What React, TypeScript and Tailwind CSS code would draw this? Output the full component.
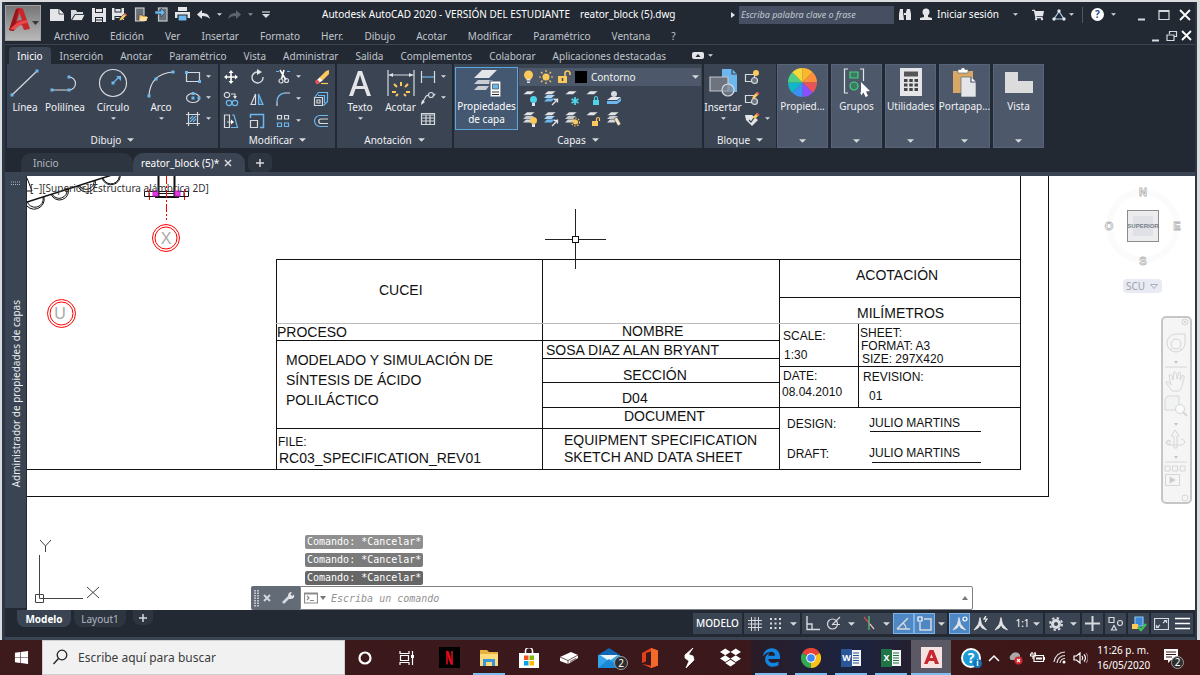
import React from "react";
import { FaDropbox, FaWindows, FaShoppingCart } from "react-icons/fa";
import { FaEdgeLegacy } from "react-icons/fa6";

type Kids = { children?: React.ReactNode };

const Ic = ({ w = 16, h = 16, vb, children }: Kids & { w?: number; h?: number; vb?: string }) => (
  <svg width={w} height={h} viewBox={vb ?? `0 0 ${w} ${h}`} fill="none" stroke="#d6d9dd" strokeWidth="1.2" aria-hidden="true" className="shrink-0">
    {children}
  </svg>
);

const B = "#6cb8ee";
const Y = "#fbc95c";

const Caret = ({ big = false, dim = false }: { big?: boolean; dim?: boolean }) => (
  <svg width={big ? 7 : 5} height={big ? 4 : 3} viewBox="0 0 6 3" className="shrink-0" aria-hidden="true">
    <path d="M0 0h6L3 3z" fill={dim ? "#8a9099" : "#d6d9dd"} />
  </svg>
);

const Dot = ({ x, y }: { x: number; y: number }) => <rect x={x - 1.5} y={y - 1.5} width="3" height="3" fill={B} stroke="none" />;

/* Stack of layer sheets used by the layer tools */
const Sheets = ({ n = 3, blue = false }: { n?: number; blue?: boolean }) => (
  <g stroke="none">
    {n > 2 && <path d="M1 11.500 4 8.500h8l-3.500 3z" fill={blue ? B : "#d6d9dd"} />}
    {n > 1 && <path d="M1 8 4 5h8L8.500 8z" fill={blue ? "#a9d3f3" : "#c5c9ce"} />}
    <path d="M1 4.500 5 1h8L9 4.500z" fill="#e3e5e8" stroke="#3b4453" strokeWidth=".5" />
  </g>
);

const Tool = ({ label, children, caret = false }: Kids & { label: string; caret?: boolean }) => (
  <span className="flex h-[21px] items-center">
    <button aria-label={label} title={label} className="flex h-[20px] w-[20px] items-center justify-center hover:bg-[#4d586a]">
      {children}
    </button>
    {caret && (
      <button aria-label={`Opciones de ${label}`} className="flex h-[20px] w-[10px] items-center justify-center">
        <Caret />
      </button>
    )}
  </span>
);

const Big = ({ label, children, caret = false, w }: Kids & { label: string; caret?: boolean; w: string }) => (
  <button className={`flex flex-col items-center ${w}`}>
    <span className="flex h-[34px] items-center justify-center">{children}</span>
    <span className="whitespace-nowrap text-[10px] leading-[14px] text-[#f0f2f4]">{label}</span>
    {caret && (
      <span className="flex h-[8px] items-center">
        <Caret />
      </span>
    )}
  </button>
);

const Panel = ({ title, w, children }: Kids & { title: string; w: string }) => (
  <section aria-label={title} className={`flex h-[84px] shrink-0 flex-col bg-[#3b4453] ${w}`}>
    <div className="flex flex-1 pt-[2px]">{children}</div>
    <button className="flex h-[16px] items-center justify-center gap-[6px] text-[10px] leading-[16px] text-[#f0f2f4]">
      {title}
      <Caret big />
    </button>
  </section>
);

const Fold = ({ label, children }: Kids & { label: string }) => (
  <button className="flex h-[84px] w-[51px] shrink-0 flex-col items-center border border-[#56637a] bg-[#4d586a]">
    <span className="flex h-[34px] items-center">{children}</span>
    <span className="whitespace-nowrap text-[10px] leading-[14px] text-[#f0f2f4]">{label}</span>
    <span className="mt-auto mb-[4px]">
      <Caret big />
    </span>
  </button>
);

const menus = ["Archivo", "Edición", "Ver", "Insertar", "Formato", "Herr.", "Dibujo", "Acotar", "Modificar", "Paramétrico", "Ventana", "?"];
const tabs = ["Inicio", "Inserción", "Anotar", "Paramétrico", "Vista", "Administrar", "Salida", "Complementos", "Colaborar", "Aplicaciones destacadas"];

const QBtn = ({ label, children }: Kids & { label: string }) => (
  <button aria-label={label} title={label} className="flex h-[20px] w-[21px] shrink-0 items-center justify-center">
    {children}
  </button>
);

function Header() {
  return (
    <header className="flex h-[43px] border-b border-[#3b4453]">
      <button aria-label="Menú de la aplicación" className="mt-[3px] flex h-[36px] w-[36px] shrink-0 items-center border border-[#a2a2a2] bg-linear-to-b from-[#777777] to-[#b9b9b9]">
        <svg width="34" height="34" viewBox="0 0 34 34" aria-hidden="true">
          <path d="M3 24 10 3q4-2 7 0l7 20-6 1-2-5-6 1-3 5z" fill="#c9252b" />
          <path d="M3 24 10 3l3-.500L9 19l-1 6z" fill="#96161b" />
          <path d="m11 15 2.500-8L16 14z" fill="#8b8b8b" />
          <path d="M4 23q7-8 17-9l1 3q-8 0-13 7z" fill="#ea4a4c" />
          <path d="M26 15h7l-3.500 4z" fill="#33373d" />
        </svg>
      </button>
      <div className="flex min-w-0 flex-1 flex-col">
        <div className="flex h-[25px] items-center">
          <div className="ml-[5px] flex items-center">
            <QBtn label="Nuevo"><Ic w={16} h={14}><path d="M1 1h9l5 5v7H1z" fill="#e3e5e8" stroke="none" /><path d="M10 1v5h5" stroke="#222933" fill="#fff" strokeWidth=".8" /></Ic></QBtn>
            <QBtn label="Abrir"><Ic w={16} h={14}><path d="M1 12V2h5l1 2h6v2H5z" fill="#d6d9dd" stroke="none" /><path d="M1.500 12.500 5 6.500h10l-3 6z" fill="#e3e5e8" stroke="#222933" strokeWidth=".8" /></Ic></QBtn>
            <QBtn label="Guardar"><Ic w={14} h={14}><path d="M0 0h14v14H0z" fill="#e3e5e8" stroke="none" /><path d="M3 0h8v5H3zM3 9h8v5H3z" fill="#222933" stroke="none" /><path d="M4 1h6v3H4zM4 10h6v1.500H4zM4 12.500h6V14H4z" fill="#e3e5e8" stroke="none" /></Ic></QBtn>
            <QBtn label="Guardar como"><Ic w={15} h={14}><path d="M0 0h12v12H0z" fill="#e3e5e8" stroke="none" /><path d="M2.500 0h7v4.500h-7zM2.500 8h7v4h-7z" fill="#222933" stroke="none" /><path d="M3.500 1h5v2.500h-5zM3.500 9h4v1h-4z" fill="#e3e5e8" stroke="none" /><path d="m7 13 1-3 5-5 2 2-5 5z" fill={Y} stroke="#222933" strokeWidth=".6" /><path d="m12 6 2 2 1-1-2-2z" fill="#e0575b" stroke="none" /></Ic></QBtn>
            <QBtn label="Abrir desde la Web"><Ic w={14} h={15}><rect x="1.500" y="1" width="8.500" height="13" fill="#6b7078" stroke="#c3c6ca" /><path d="M5 14V8h3l1 1h4v5z" fill={Y} stroke="#222933" strokeWidth=".5" /><path d="m5 14 2-4h7l-2 4z" fill="#ffe0a0" stroke="none" /></Ic></QBtn>
            <QBtn label="Guardar en la Web"><Ic w={14} h={15}><rect x="3.500" y="1" width="8.500" height="13" fill="#6b7078" stroke="#c3c6ca" /><path d="M0 4h6V1l4 4.500L6 10V7H0z" fill={B} stroke="#222933" strokeWidth=".5" /></Ic></QBtn>
            <QBtn label="Imprimir"><Ic w={15} h={15}><path d="M3 0h9v4H3zM0 5h15v6H0z" fill="#e3e5e8" stroke="none" /><path d="M3 8h9v6H3z" fill={B} stroke="#222933" /></Ic></QBtn>
            <QBtn label="Deshacer"><Ic w={15} h={12}><path d="M6 1v3c5 0 7 2 8 6-2-2-4-3-8-3v3L1 5.500z" fill="#e3e5e8" stroke="none" /></Ic></QBtn>
            <span className="flex w-[10px] justify-center"><Caret /></span>
            <QBtn label="Rehacer"><Ic w={15} h={12}><path d="M9 1v3C4 4 2 6 1 10c2-2 4-3 8-3v3l5-4.500z" fill="#5c636e" stroke="none" /></Ic></QBtn>
            <span className="flex w-[10px] justify-center"><Caret dim /></span>
            <QBtn label="Personalizar"><Ic w={8} h={8}><path d="M0 1h8" /><path d="M0 3h8L4 7z" fill="#d6d9dd" stroke="none" /></Ic></QBtn>
          </div>
          <h1 className="flex min-w-0 flex-1 items-center gap-[10px] pl-[46px] text-[10px] whitespace-nowrap text-white">
            <span>Autodesk AutoCAD 2020 - VERSIÓN DEL ESTUDIANTE</span>
            <span>reator_block (5).dwg</span>
          </h1>
          <div className="flex shrink-0 items-center">
            <button aria-label="Contraer búsqueda" className="flex w-[8px] items-center"><svg width="4" height="6" aria-hidden="true"><path d="M0 0v6l4-3z" fill="#e3e5e8" /></svg></button>
            <input aria-label="Buscar" placeholder="Escriba palabra clave o frase" className="h-[18px] w-[155px] bg-[#454f61] px-[2px] text-[9px] text-white italic outline-none placeholder:text-[#c3c8d1]" />
            <QBtn label="Buscar"><Ic w={14} h={13}><path d="M2 1h3v3l1 8H1V6zM9 1h3l1 5v6H8V4z" fill="#e3e5e8" stroke="none" /><path d="M6 5h2v2H6z" fill="#e3e5e8" stroke="none" /></Ic></QBtn>
            <button className="ml-[4px] flex items-center gap-[4px] text-[10px] text-white">
              <Ic w={14} h={13}><circle cx="7" cy="4" r="3.500" fill="#e3e5e8" stroke="none" /><path d="M5 6h4v3l4 1v2H1v-2l4-1z" fill="#e3e5e8" stroke="none" /></Ic>
              <span className="w-[66px] text-left whitespace-nowrap">Iniciar sesión</span>
            </button>
            <span className="flex w-[24px] justify-center"><Caret /></span>
            <QBtn label="App Store"><FaShoppingCart size={12} color="#e3e5e8" /></QBtn>
            <QBtn label="Autodesk"><Ic w={14} h={12}><path d="M7 2.500 2 10h10z" stroke="#a9d3f3" /><circle cx="7" cy="2" r="1.700" fill="#e3e5e8" stroke="none" /><circle cx="2" cy="10" r="1.700" fill="#e3e5e8" stroke="none" /><circle cx="12" cy="10" r="1.700" fill="#e3e5e8" stroke="none" /></Ic></QBtn>
            <Caret />
            <span className="ml-[8px] h-[16px] w-px bg-[#4d586a]" />
            <button aria-label="Ayuda" className="ml-[8px] flex h-[13px] w-[13px] items-center justify-center rounded-full bg-white text-[10px] font-bold text-[#1d4f91]">?</button>
            <span className="flex w-[19px] justify-center"><Caret /></span>
            <div className="ml-[8px] flex">
              <button aria-label="Minimizar" className="flex w-[22px] justify-center"><Ic w={12} h={12}><path d="M2 10.500h7" strokeWidth="2" /></Ic></button>
              <button aria-label="Maximizar" className="flex w-[22px] justify-center"><Ic w={12} h={12}><path d="M1 1.500h10v9H1z" /><path d="M1 2h10" strokeWidth="2" /></Ic></button>
              <button aria-label="Cerrar" className="flex w-[20px] justify-center"><Ic w={12} h={12}><path d="m1 1 10 10M11 1 1 11" strokeWidth="1.800" stroke="#fff" /></Ic></button>
            </div>
          </div>
        </div>
        <div className="flex h-[17px] items-center pr-[3px]">
          <nav aria-label="Menú" className="flex flex-1 gap-[21px] pl-[13px] text-[10px] text-[#c0c4cb]">
            {menus.map((m) => <button key={m} className="leading-[16px]">{m}</button>)}
          </nav>
          <button aria-label="Minimizar dibujo" className="w-[15px]"><Ic w={10} h={12}><path d="M1 10.500h7" strokeWidth="2" /></Ic></button>
          <button aria-label="Restaurar dibujo" className="w-[15px]"><Ic w={12} h={12}><path d="M3.500 4V1.500h7v5H8M1 5h7v5.500H1z" /></Ic></button>
          <button aria-label="Cerrar dibujo" className="w-[11px]"><Ic w={11} h={12}><path d="m1 1 9 9M10 1 1 10" strokeWidth="1.800" stroke="#fff" /></Ic></button>
        </div>
      </div>
    </header>
  );
}

function Ribbon() {
  return (
    <div>
      <div role="tablist" className="flex h-[19px] items-end pl-[4px] text-[10px] text-[#c0c4cb]">
        {tabs.map((t, i) => (
          <button key={t} role="tab" aria-selected={i === 0} className={i === 0 ? "h-[17px] rounded-t-sm bg-[#3b4453] px-[8px] leading-[16px] text-white" : "h-[17px] pr-[8px] pl-[9px] leading-[16px]"}>
            {t}
          </button>
        ))}
        <button aria-label="Minimizar cinta" className="ml-[18px] flex h-[17px] items-center gap-[4px]">
          <Ic w={12} h={7}><rect width="12" height="7" rx="2" fill="#e3e5e8" stroke="none" /><path d="M3.500 5h5L6 2z" fill="#222933" stroke="none" /></Ic>
          <Caret />
        </button>
      </div>
      <div className="flex h-[85px] gap-[2px] overflow-hidden pl-[2px]">
        <Panel title="Dibujo" w="w-[211px]">
          <Big label="Línea" w="w-[36px]"><Ic w={30} h={30}><path d="M2 27 27 3" /><Dot x={2} y={27} /><Dot x={27} y={3} /></Ic></Big>
          <Big label="Polilínea" w="w-[44px]"><Ic w={30} h={30}><path d="M2 22h17a6.500 6.500 0 0 0 0-13" /><Dot x={2} y={22} /><Dot x={19} y={22} /><Dot x={19} y={9} /></Ic></Big>
          <Big label="Círculo" w="w-[52px]" caret><Ic w={30} h={30}><circle cx="15" cy="15" r="13.500" /><path d="m15 15 6-6" stroke={B} /><path d="M18 8h5v5z" fill={B} stroke="none" /><Dot x={15} y={15} /></Ic></Big>
          <Big label="Arco" w="w-[44px]" caret><Ic w={30} h={30}><path d="M3 28Q4 6 27 4" /><Dot x={3} y={28} /><Dot x={10} y={11} /><Dot x={27} y={4} /></Ic></Big>
          <div className="flex flex-col">
            <Tool label="Rectángulo" caret><Ic><path d="M1.500 3.500h13v9h-13z" /><Dot x={1.500} y={3.500} /><Dot x={14.500} y={12.500} /></Ic></Tool>
            <Tool label="Elipse" caret><Ic><ellipse cx="8" cy="8" rx="6.500" ry="4.500" /><Dot x={8} y={8} /><Dot x={14} y={8} /><Dot x={8} y={3.500} /></Ic></Tool>
            <Tool label="Sombreado" caret><Ic><path d="M3.500 1v14M12.500 1v14M1 3.500h14M1 12.500h14" /><path d="m5 8 3-3M5 11l6-6M8 11l3-3" stroke={B} /></Ic></Tool>
          </div>
        </Panel>
        <Panel title="Modificar" w="w-[115px]">
          <div className="grid grid-cols-[26px_26px_38px_22px] pl-[1px]">
            <Tool label="Desplaza"><Ic><path d="M8 2v12M2 8h12" strokeWidth="1.600" stroke="#fff" /><path d="M8 1 5.500 4h5zM8 15l-2.500-3h5zM1 8l3-2.500v5zM15 8l-3-2.500v5z" fill="#fff" stroke="none" /></Ic></Tool>
            <Tool label="Gira"><Ic><path d="M9 3a5.500 5.500 0 1 0 5 5" strokeWidth="1.400" /><path d="M8 0v6l5-3z" fill="#e3e5e8" stroke="none" /></Ic></Tool>
            <Tool label="Recorta" caret><Ic><path d="M1 2.500h3M12 2.500h3" stroke={B} /><path d="m5 1 6 10M9 1 6.500 10" stroke="#fff" strokeWidth="1.600" /><circle cx="6" cy="12" r="2" /><circle cx="11.500" cy="11.500" r="2" /></Ic></Tool>
            <Tool label="Borra"><Ic><path d="m6 9 7-7 3-1v4l-7 7z" fill={Y} stroke="none" /><path d="m3 12 3.500-3.500 3 3L6 14H3z" fill="#fff" stroke="none" /><path d="m2 12 2-1.500L7 13l-1.500 2H3z" fill="#e0575b" stroke="none" /><path d="M8 14.500h7" stroke={Y} /></Ic></Tool>
            <Tool label="Copia"><Ic><circle cx="4" cy="4" r="2.700" /><circle cx="6" cy="12" r="2.700" stroke={B} /><circle cx="12" cy="12" r="2.700" stroke={B} /><path d="M8 3h4v4" /><path d="M10 5h4l-2 3z" fill="#e3e5e8" stroke="none" /></Ic></Tool>
            <Tool label="Simetría"><Ic><path d="M6.500 3v10.500H2z" /><path d="M9.500 3v10.500H14z" stroke={B} fill="#3f6d93" /></Ic></Tool>
            <Tool label="Empalme" caret><Ic><path d="M2 11Q2 3 10 2" stroke={B} strokeWidth="1.400" /><path d="M10 2h5M2 11v4" /></Ic></Tool>
            <Tool label="Descompone"><Ic><path d="M1.500 6.500h8v8h-8z" /><path d="m1.500 6.500 4-5h9v9l-4 4M5 4.500h6.500V12" stroke={B} /><path d="M4 9h3v3H4z" /></Ic></Tool>
            <Tool label="Estira"><Ic><path d="M1.500 2v12.500h5V2zM4 9h6" /><path d="M9 2h2l3.500 12.500H8" stroke={B} /><path d="m8 6.500 3 2.500-3 2.500z" fill="#fff" stroke="none" /></Ic></Tool>
            <Tool label="Escala"><Ic><path d="M1.500 7.500h7v7h-7z" /><path d="M1.500 5V1.500h13v13H11" stroke={B} strokeWidth="1.500" /></Ic></Tool>
            <Tool label="Matriz" caret><Ic><path d="M2.500 2.500h4V6h-4zM9.500 2.500h4V6h-4z" /><path d="M2.500 10h4v3.500h-4zM9.500 10h4v3.500h-4z" stroke={B} /></Ic></Tool>
            <Tool label="Desfase"><Ic><path d="M15 2.500H7a5 5 0 0 0 0 11h8" stroke={B} /><path d="M15 6H8a2 2 0 0 0 0 4.500h7" /></Ic></Tool>
          </div>
        </Panel>
        <Panel title="Anotación" w="w-[115px]">
          <Big label="Texto" w="w-[46px]" caret><Ic w={26} h={28}><path d="M2 27 11 2h4l9 25h-4l-2.500-7H8.500L6 27zM9.500 17h7L13 6z" fill="#e3e5e8" stroke="none" /></Ic></Big>
          <Big label="Acotar" w="w-[35px]"><Ic w={30} h={30}><path d="M2 2v26M28 2v26M2 7h26" /><path d="m3 7 4-2v4zM27 7l-4-2v4z" fill="#e3e5e8" stroke="none" /><path d="M15 14v4M8 16l3 3M22 16l-3 3M6 24h4M20 24h4M10 28l2-2M20 28l-2-2" stroke={Y} strokeWidth="2" /></Ic></Big>
          <div className="flex flex-col">
            <Tool label="Lineal" caret><Ic><path d="M1 8h14" stroke={B} /><path d="M1.500 2v12M14.500 2v12" /></Ic></Tool>
            <Tool label="Directriz" caret><Ic><circle cx="11" cy="5" r="2.500" /><path d="M14 6q0-2 1.500-2M9 5q-3 0-4 3l-3 5" /><path d="m1 15 1-5 3 2z" fill="#e3e5e8" stroke="none" /></Ic></Tool>
            <Tool label="Tabla"><Ic><path d="M1.500 2.500h13v11h-13zM1.500 4h13M1.500 7h13M1.500 10h13M6 4v10M10 4v10" /></Ic></Tool>
          </div>
        </Panel>
        <Panel title="Capas" w="w-[248px]">
          <button className="mt-px ml-[1px] flex h-[63px] w-[63px] shrink-0 flex-col items-center border border-[#5aa7e0] bg-[#445872]">
            <Ic w={32} h={32}><path d="m3 10 8-8h15l-8 8z" fill="#e3e5e8" stroke="none" /><path d="m3 16 4-4h15l-4 4zM3 22l4-4h11l-3 4z" fill="#c9cdd2" stroke="none" /><path d="M19 13h11v16H19z" fill="#fff" stroke="#445872" /><path d="M21.500 16h6v5h-6z" fill={B} stroke="#333" strokeWidth=".6" /><path d="M21 24h7M21 26.500h7" stroke="#333" /></Ic>
            <span className="text-[10px] leading-[13px] text-white">Propiedades<br />de capa</span>
          </button>
          <div className="flex flex-1 flex-col pl-[1px]">
            <div className="mt-[2px] mr-px flex h-[18px] items-center gap-[4px] bg-[#4d586a] pl-[3px]">
              <Ic w={13} h={14}><circle cx="6.500" cy="5" r="4.500" fill={Y} stroke="none" /><path d="M4.500 9h4v1.500h-4zM5 11.500h3V13H5z" fill="#e3e5e8" stroke="none" /></Ic>
              <Ic w={14} h={14}><circle cx="7" cy="7" r="3.500" fill={Y} stroke="none" /><path d="M7 0v2M7 12v2M0 7h2M12 7h2M2 2l1.500 1.500M10.500 10.500 12 12M12 2l-1.500 1.500M3.500 10.500 2 12" stroke={Y} /></Ic>
              <Ic w={14} h={14}><path d="M1 6h9v7H1z" fill={Y} stroke="none" /><path d="M8 6V3.500a2.500 2.500 0 0 1 5 0V5" stroke={Y} strokeWidth="1.600" /><path d="M5.500 8v3" stroke="#3b4453" strokeWidth="1.500" /></Ic>
              <span className="h-[12px] w-[12px] bg-black" />
              <span className="flex min-w-0 flex-1 items-center pr-[2px]">
                <select aria-label="Capa actual" className="min-w-0 flex-1 appearance-none text-[10px] leading-[16px] text-[#f0f2f4] outline-none">
                  <option>Contorno</option>
                </select>
                <Caret big />
              </span>
            </div>
            <div className="mt-px flex w-[105px] flex-wrap">
              {["Desactivar", "Aislar", "Inutilizar", "Bloquear", "Definir como actual", "Activar todas", "Desaislar", "Reutilizar todas", "Desbloquear", "Igualar capa"].map((l, i) => (
                <button key={l} aria-label={l} className="flex h-[21px] w-[21px] items-center justify-center">
                  <Ic>
                    {i === 4 ? <g stroke="none"><path d="m1 10 4-3h10l-4 3z" fill="#e3e5e8" /><path d="M1 11v3h10l4-3V8l-4 3z" fill={B} /><circle cx="8" cy="4" r="3" fill="#d6d9dd" /></g> : <Sheets n={[1, 3, 1, 1, 3, 3, 3, 3, 1, 3][i]} blue={i === 1 || i === 6} />}
                    {i === 0 && <g stroke="none"><circle cx="11.500" cy="9.500" r="3.500" fill="#4fd3e6" /><path d="M10 13h3v3h-3z" fill="#e3e5e8" /></g>}
                    {i === 5 && <g stroke="none"><circle cx="11.500" cy="9.500" r="3.500" fill={Y} /><path d="M10 13h3v3h-3z" fill="#e3e5e8" /></g>}
                    {(i === 1 || i === 6) && <path d="m9 15 5-5M14.500 8.500v4M14.500 9.500h-3.500" stroke="#e3e5e8" strokeWidth="1.300" />}
                    {i === 2 && <path d="M11 7v8M7.500 9l7 4M14.500 9l-7 4" stroke="#4fd3e6" strokeWidth="1.800" />}
                    {i === 7 && <g><circle cx="11.500" cy="11" r="2.500" fill={Y} stroke="none" /><circle cx="11.500" cy="11" r="4" stroke={Y} strokeDasharray="1.500 1.500" /></g>}
                    {i === 3 && <g><path d="M8 10h6v5H8z" fill="#4fd3e6" stroke="none" /><path d="M9.500 10V8a1.500 1.500 0 0 1 3 0v2" stroke="#4fd3e6" /></g>}
                    {i === 8 && <g><path d="M7 10h6v5H7z" fill={Y} stroke="none" /><path d="M11.500 10V8a1.500 1.500 0 0 1 3 0v2" stroke={Y} /></g>}
                    {i === 9 && <path d="m8 8 3-2 4 7-3 2z" fill="#f3e6c4" stroke="#3b4453" strokeWidth=".6" />}
                  </Ic>
                </button>
              ))}
            </div>
          </div>
        </Panel>
        <Panel title="Bloque" w="w-[72px]">
          <Big label="Insertar" w="w-[38px]" caret><Ic w={30} h={30}><path d="M14 1h10l5 5v18H14z" fill={B} stroke="none" /><path d="M24 1v5h5" stroke="#3b4453" /><path d="M2 9h18v14H2z" fill="#6d7480" stroke="#c3c6ca" /><circle cx="20" cy="22" r="6" fill="#808894" fillOpacity=".7" /></Ic></Big>
          <div className="flex flex-col">
            {["Crear bloque", "Editar bloque", "Editar atributos"].map((l, i) => (
              <Tool key={l} label={l} caret={i === 2}>
                <Ic>
                  {i < 2 ? <g><path d="M1.500 5.500h9v7h-9z" /><circle cx="10.500" cy="11.500" r="3" fill="#6d7480" /></g> : <path d="M1 4h7l6 5-6 6-6-6z" fill="#e3e5e8" stroke="none" />}
                  {i === 0 ? <circle cx="12" cy="4" r="3" fill={Y} stroke="none" /> : <g stroke="none"><path d="m8 9 1-3 4-4 2 2-4 4z" fill={Y} /><path d="m12 3 2 2 1.500-1.500-2-2z" fill="#e0575b" /></g>}
                  {i === 2 && <path d="m5 9 2 2 3-4" stroke="#3b4453" />}
                </Ic>
              </Tool>
            ))}
          </div>
        </Panel>
        <div className="ml-[-1px] flex gap-[3px]">
          <Fold label="Propied...">
            <svg width="29" height="29" viewBox="-15 -15 30 30" aria-hidden="true">
              {["#ffb62e", "#ff8f3a", "#e9545a", "#8b4fff", "#3a8ff0", "#12b5c9", "#4fcf86", "#f3d93a"].map((c, i) => (
                <path key={c} d="M0 0 0-15A15 15 0 0 1 10.600-10.600z" fill={c} transform={`rotate(${i * 45})`} />
              ))}
            </svg>
          </Fold>
          <Fold label="Grupos"><Ic w={28} h={30}><path d="M5 2H1.500v24H5M17 2h3.500v12M17 26h1" stroke="#e3e5e8" /><path d="M7 5h8v6H7z" stroke="#45d17f" fill="#3c7a64" /><circle cx="11" cy="19" r="4" stroke="#45d17f" fill="#3c7a64" /><path d="m18 15 9 9-4 .500 2 4.500-2.500 1-2-4.500-2.500 3z" fill="#fff" stroke="none" /></Ic></Fold>
          <Fold label="Utilidades"><Ic w={22} h={28}><path d="M0 0h22v28H0z" fill="#e3e5e8" stroke="none" /><path d="M4 3.500h14v5H4z" fill="#555" stroke="none" /><path d="M4 12.500h14M4 17h14M4 21.500h14" stroke="#444" strokeWidth="3" strokeDasharray="3.500 1.750" /></Ic></Fold>
          <Fold label="Portapap..."><Ic w={26} h={29}><path d="M1 3h20v22H1z" fill="#d9a866" stroke="none" /><path d="M6 1.500h3a2 2 0 0 1 4 0h3V5H6z" fill="#fff" stroke="#4d586a" strokeWidth=".6" /><path d="M9 9h10l5 5v15H9z" fill="#e3e5e8" stroke="#4d586a" strokeWidth=".6" /><path d="M19 9v5h5" stroke="#4d586a" fill="#fff" /></Ic></Fold>
          <Fold label="Vista"><Ic w={30} h={24}><path d="M1 2h13v9h15v12H1z" fill="#dcdcdc" stroke="none" /></Ic></Fold>
        </div>
      </div>
    </div>
  );
}

function FileTabs() {
  return (
    <div className="border-b-4 border-[#3b4453]">
      <div role="tablist" className="flex h-[23px] items-end pl-[16px] text-[10px] leading-[16px]">
        <button role="tab" aria-selected="false" className="h-[19px] w-[112px] rounded-t-[10px] bg-[#2d3541] pl-[12px] text-left text-[#b3b8c0]">Inicio</button>
        <div className="flex h-[19px] w-[112px] items-center rounded-t-[10px] bg-[#3b4453] pl-[8px] text-white">
          <button role="tab" aria-selected="true" className="w-[83px] text-left whitespace-nowrap">reator_block (5)*</button>
          <button aria-label="Cerrar reator_block"><Ic w={8} h={8}><path d="m1 1 6 6M7 1 1 7" strokeWidth="1.500" /></Ic></button>
        </div>
        <button aria-label="Nuevo dibujo" className="ml-[3px] flex h-[19px] w-[24px] items-center justify-center rounded-[6px] bg-[#2d3541]">
          <Ic w={8} h={8}><path d="M4 0v8M0 4h8" strokeWidth="1.500" /></Ic>
        </button>
      </div>
    </div>
  );
}

type Label = [string, number, number];
const wide: Label[] = [
  ["CUCEI", 379, 295], ["PROCESO", 277, 337], ["MODELADO Y SIMULACIÓN DE", 286, 365], ["SÍNTESIS DE ÁCIDO", 286, 385], ["POLILÁCTICO", 286, 405],
  ["NOMBRE", 622, 336], ["SOSA DIAZ ALAN BRYANT", 546, 355], ["SECCIÓN", 623, 380], ["D04", 622, 403], ["DOCUMENT", 624, 421],
  ["ACOTACIÓN", 856, 280], ["MILÍMETROS", 857, 318], ["RC03_SPECIFICATION_REV01", 279, 463], ["EQUIPMENT SPECIFICATION", 564, 445], ["SKETCH AND DATA SHEET", 564, 462],
];
const small: Label[] = [
  ["FILE:", 278, 446], ["SCALE:", 783, 340], ["1:30", 784, 359], ["SHEET:", 860, 337], ["FORMAT: A3", 861, 350], ["SIZE: 297X420", 862, 363],
  ["DATE:", 783, 380], ["08.04.2010", 782, 396], ["REVISION:", 863, 381], ["01", 869, 400], ["DESIGN:", 787, 428], ["DRAFT:", 787, 458],
  ["JULIO MARTINS", 869, 427], ["JULIO MARTINS", 869, 457],
];

const Drawing = () => (
  <svg width="1022" height="434" viewBox="27 176 1022 434" className="absolute top-0 left-0" aria-label="Cajetín del plano" role="img">
    <g stroke="#111" fill="none" shapeRendering="crispEdges">
      <path d="M1048.500 176V496.500H27M1020.500 176V469.500H27" />
      <path d="M276.500 469V259.500H1020M542.500 259V469M779.500 259V469" />
      <path d="M276 340.500H779M542 358.500H779M542 382.500H779M542 407.500H779M276 428.500H779" />
      <path d="M779 297.500H1020M779 366.500H1020M779 407.500H1020M858.500 324V407" />
      <path d="M870 431.500H981M872 462.500H981" />
      <path d="M276 323.500H1020" stroke="#bbb" />
      <path d="M575.500 209V269M545 239.500H606" stroke="#222" />
      <rect x="572.500" y="236.500" width="6" height="6" fill="#fff" />
    </g>
    <g fill="#111" fontFamily="'Liberation Sans', Arial, sans-serif" fontSize="14">
      {wide.map(([t, x, y]) => <text key={t} x={x} y={y}>{t}</text>)}
    </g>
    <g fill="#111" fontFamily="'Liberation Sans', Arial, sans-serif" fontSize="12">
      {small.map(([t, x, y]) => <text key={`${t}${y}`} x={x} y={y}>{t}</text>)}
    </g>
    <g stroke="#111" fill="none">
      <path d="M27 202 112 175" strokeWidth="1.500" />
      <path d="M27 201a8 8 0 0 0 16-4M25 203a10 10 0 0 0 19-6M52 194a8 8 0 0 0 15-5M51 194a9 9 0 0 0 17-6M79 185a8 8 0 0 0 15-5M78 186a9 9 0 0 0 17-6M103 178a8 8 0 0 0 16-5M102 178a9 9 0 0 0 18-5M27 178l5 13h-5" />
      <path d="M158.500 176V197M174.500 176V197" strokeWidth="2" />
      <path d="M144.500 191.500H188.500V196.500H144.500zM158 193.500H175M149 191v6M184 191v6M155 197.500h24" />
      <path d="M153 191h5v5h-5zM175 191h5v5h-5z" fill="#e23be2" stroke="#d21bd2" />
      <g stroke="#f00">
        <path d="M166.500 176V220" strokeDasharray="8 2 2 2" />
        <path d="M149.500 189v11M184.500 189v11" strokeDasharray="3 1" />
        <circle cx="166" cy="238" r="13.500" /><circle cx="166" cy="238" r="11" />
        <circle cx="61.500" cy="313.500" r="14" /><circle cx="61.500" cy="313.500" r="11.500" />
      </g>
    </g>
    <g fill="#aaa" fontFamily="'Liberation Sans', Arial, sans-serif" fontSize="16" textAnchor="middle">
      <text x="166" y="244">X</text>
      <text x="60" y="319">U</text>
    </g>
  </svg>
);

const ViewCube = () => (
  <div className="absolute top-[8px] right-[10px] flex w-[84px] flex-col items-center">
    <svg width="84" height="84" viewBox="0 0 84 84" fontFamily="'Liberation Sans', Arial, sans-serif" fontSize="11" fontWeight="bold" textAnchor="middle" aria-label="ViewCube" role="img">
      <circle cx="42" cy="42" r="34" fill="none" stroke="#fbfbfb" strokeWidth="6" />
      <rect x="26.500" y="26.500" width="31" height="31" fill="#ececee" stroke="#8c8c8c" />
      <rect x="32" y="32" width="20" height="20" fill="#dfe1e6" />
      <text x="42" y="44" fontSize="6" fill="#777e88">SUPERIOR</text>
      <g fill="#fff" stroke="#b4b4b4" strokeWidth=".8">
        <text x="42" y="12">N</text><text x="42" y="81">S</text><text x="8" y="46">O</text><text x="76" y="46">E</text>
      </g>
    </svg>
    <button className="mt-[11px] ml-[-2px] flex h-[14px] w-[39px] items-center justify-center gap-[5px] rounded-sm bg-[#e9ebf4] text-[10px] text-[#9b9ea6]">
      SCU
      <svg width="8" height="5" aria-hidden="true"><path d="M.500.500h7L4 4.500z" fill="none" stroke="#a9adb5" /></svg>
    </button>
  </div>
);

const NavBar = () => (
  <div className="absolute top-[140px] right-[3px] flex h-[188px] w-[31px] flex-col items-center rounded-[5px] border-2 border-[#c6c6c6] bg-[#f5f5f5]">
    <svg width="27" height="184" viewBox="0 0 27 184" fill="none" stroke="#d6d6d6" role="img" aria-label="Barra de navegación">
      <circle cx="22" cy="4" r="3" /><path d="m20.500 2.500 3 3M23.500 2.500l-3 3" />
      <path d="M13 16h9v9a9 9 0 1 1-9-9z" /><circle cx="13" cy="26" r="5" /><path d="m9 30-2 3M17 30l2 3" />
      <path d="M11 43h4l-2 3z" fill="#c6c6c6" stroke="none" /><path d="M2 49h22" />
      <path d="M9 73c-2-4-5-6-6-9 2-1 4 1 5 3L6 57c2-1 3 0 4 5l1-8c2 0 3 1 3 7l2-7c2 0 2 2 1 8l3-5c2 1 1 3 0 7-1 5-2 7-4 9z" />
      <path d="M2 81l3-3h11v11l-3 3H2z" fill="#f0f3f2" /><circle cx="17" cy="91" r="4.500" fill="#fafafa" /><path d="m20 94 4 4" strokeWidth="2" />
      <path d="M11 105h4l-2 3z" fill="#c6c6c6" stroke="none" />
      <path d="M11 130v-12H8l4-6 4 6h-2v12zM6 122c-4 1-4 4 0 5h12c5-1 5-5 0-6M3 125l4-3v5z" />
      <path d="M11 138h4l-2 3z" fill="#c6c6c6" stroke="none" /><path d="M2 144h22" />
      <path d="M2 148h5v5H2zM9.500 148h5v5h-5zM17 148h5v5h-5zM2.500 156.500h14v11h-14z" /><path d="m7 159 5 3-5 3z" fill="#c6c6c6" />
      <circle cx="22" cy="180" r="3" />
    </svg>
  </div>
);

const fades = ["bg-[#8f8f8f]", "bg-[#7a7a7a]", "bg-[#666666]"];

function Workspace() {
  return (
    <main className="flex min-h-[434px] flex-1">
      <aside className="mb-[2px] flex w-[22px] shrink-0 flex-col items-center border-r border-[#222933] bg-[#3b4453]">
        <svg width="10" height="5" className="mt-[5px]" aria-hidden="true"><path d="M0 1h10M0 3.500h10" stroke="#aeb4bd" strokeDasharray="1 1" /></svg>
        <span className="mt-[114px] rotate-180 text-[10px] leading-[16px] whitespace-nowrap text-[#eceef1] [writing-mode:vertical-rl]">Administrador de propiedades de capas</span>
      </aside>
      <div className="relative flex-1 overflow-hidden bg-white">
        <Drawing />
        <p className="absolute top-[4px] left-[3px] text-[10px] leading-[16px] text-[#333]">[−][Superior][Estructura alámbrica 2D]</p>
        <ViewCube />
        <NavBar />
        <svg width="80" height="70" viewBox="0 0 80 70" className="absolute bottom-0 left-[4px]" fill="none" stroke="#444" aria-label="Icono SCP" role="img">
          <path d="M8.500 15v43.500H52M4.500 54.500h8v8h-8zM9 0l5.500 6L20 0M14.500 6v6M56 47l12 11M68 47 56 58" />
        </svg>
        <div className="absolute bottom-0 left-[224px] flex w-[722px] flex-col">
          <ol className="ml-[54px] flex flex-col items-start gap-[4px] pb-[1px] font-['DejaVu_Sans_Mono',monospace] text-[10px] leading-[14px] text-white">
            {fades.map((f) => <li key={f} className={`rounded-[2px] px-[2px] ${f}`}>Comando: *Cancelar*</li>)}
          </ol>
          <form className="flex h-[24px]" onSubmit={(e) => e.preventDefault()}>
            <div className="flex w-[49px] items-center rounded-l-[2px] bg-[#636b77] pl-[3px]">
              <svg width="5" height="17" aria-hidden="true"><path d="M1 0v17M4 0v17" stroke="#e3e5e8" strokeWidth="1.500" strokeDasharray="1.500 1" /></svg>
              <button type="button" aria-label="Cerrar línea de comando" className="ml-[4px]"><Ic w={8} h={8}><path d="m1 1 6 6M7 1 1 7" strokeWidth="1.800" /></Ic></button>
              <button type="button" aria-label="Personalizar" className="ml-[10px]"><Ic w={14} h={14}><path d="m2 12 6-6" strokeWidth="2.600" /><path d="M7 5q0-4 4-4L9.500 3.500l1.500 1.500L13 3.500q1 4-3 4.500H8z" fill="#e3e5e8" stroke="none" /></Ic></button>
            </div>
            <div className="flex flex-1 items-center rounded-r-[2px] border border-[#7c7f84] bg-white pl-[3px]">
              <Ic w={14} h={12}><path d="M.500 1h13v10H.500zM.500 2h13" stroke="#8b8b8b" /><path d="m3 4 2 2-2 2M6 8.500h4" stroke="#8b8b8b" /></Ic>
              <svg width="6" height="4" className="mx-[2px]" aria-hidden="true"><path d="M0 0h6L3 4z" fill="#777" /></svg>
              <input aria-label="Comando" placeholder="Escriba un comando" className="ml-[3px] min-w-0 flex-1 font-['DejaVu_Sans_Mono',monospace] text-[10px] italic outline-none placeholder:text-[#929292]" />
              <svg width="6" height="4" className="mr-[4px]" aria-hidden="true"><path d="M0 4h6L3 0z" fill="#777" /></svg>
            </div>
          </form>
        </div>
      </div>
    </main>
  );
}

const S = ({ label, on = false, w = "w-[21px]", children }: Kids & { label: string; on?: boolean; w?: string }) => (
  <button aria-label={label} aria-pressed={on} className={`flex h-[21px] items-center justify-center ${w} ${on ? "border border-[#7cb2e8] bg-[#4f86c4]" : ""}`}>
    {children}
  </button>
);
const G = ({ children }: Kids) => <div className="flex h-[21px] items-center bg-[#3b4453]">{children}</div>;

const Compass = ({ extra }: { extra?: React.ReactNode }) => (
  <Ic><path d="M7 1.500 8.500 8l5 6-4.500-2L7 9l-2 3-4 2 4.500-6z" fill="#e3e5e8" stroke="#e3e5e8" strokeWidth=".8" />{extra}</Ic>
);

function StatusBar() {
  return (
    <footer className="flex h-[30px] items-start border-b-[3px] border-[#3b4453]">
      <div className="flex items-start gap-[3px] pl-[12px] text-[10px] text-[#b3b8c0]">
        <button className="h-[17px] w-[54px] rounded-b-[8px] bg-[#3b4453] leading-[16px] font-bold text-white">Modelo</button>
        <button className="h-[17px] w-[52px] rounded-b-[8px] bg-[#2d3541] leading-[16px]">Layout1</button>
        <button aria-label="Nueva presentación" className="ml-[4px] flex h-[15px] w-[20px] items-center justify-center rounded-b-[7px] bg-[#2d3541]"><Ic w={8} h={8}><path d="M4 0v8M0 4h8" strokeWidth="1.500" /></Ic></button>
      </div>
      <div className="mt-[3px] mr-[2px] ml-auto flex gap-[2px]">
        <G><button className="w-[49px] text-[10px] font-medium text-white">MODELO</button></G>
        <G>
          <S label="Rejilla"><Ic w={14} h={14}><path d="M3.500 0v14M7 0v14M10.500 0v14M0 3.500h14M0 7h14M0 10.500h14" strokeWidth="1" /></Ic></S>
          <S label="Forzado"><Ic w={13} h={13}><path d="M1 2h12M1 6.500h12M1 11h12" strokeWidth="2" strokeDasharray="2 2.500" /></Ic></S>
          <S label="Opciones de forzado" w="w-[14px]"><Caret big /></S>
        </G>
        <G>
          <S label="Orto"><Ic w={15} h={15}><path d="M2 0v13.500h13M2 8h5v5" strokeWidth="1.400" /></Ic></S>
          <S label="Polar"><Ic w={15} h={15}><circle cx="6.500" cy="8" r="5" /><path d="M6 9 14 1M6 8.500h8" /></Ic></S>
          <S label="Opciones polares" w="w-[14px]"><Caret big /></S>
          <S label="Isométrico"><Ic w={14} h={15}><path d="m2 1 10 12" stroke="#d44a50" /><path d="M7 0v14" stroke="#57c97d" /><path d="m8 8 4 5" /></Ic></S>
          <S label="Opciones isométricas" w="w-[14px]"><Caret big /></S>
          <S label="Rastreo" on><Ic w={15} h={14}><path d="M1 12 12 1M1 12h13" strokeWidth="1.500" /><path d="M7 6q3 2 3 6" /></Ic></S>
          <S label="Referencia a objetos" on><Ic w={15} h={15}><path d="M3 6v8h11V3H7" strokeWidth="1.500" /><path d="M1 1h4v4H1z" stroke="#fff" /></Ic></S>
          <S label="Opciones de referencia" w="w-[12px]"><Caret big /></S>
        </G>
        <G>
          <S label="Visibilidad de anotación" on><Compass extra={<circle cx="13" cy="3" r="2" stroke="#fff" />} /></S>
          <S label="Escala automática"><Compass extra={<path d="m13 0-2 3h3l-2 3" stroke="#fff" />} /></S>
          <S label="Anotación"><Compass /></S>
          <button className="flex h-[21px] w-[31px] items-center justify-center gap-[3px] text-[10px] text-white">1:1<Caret big /></button>
        </G>
        <G>
          <S label="Espacio de trabajo"><Ic w={14} h={14}><circle cx="7" cy="7" r="3.500" strokeWidth="3" /><circle cx="7" cy="7" r="6" strokeWidth="2" strokeDasharray="2.400 2.310" /></Ic></S>
          <S label="Opciones de espacio" w="w-[14px]"><Caret big /></S>
        </G>
        <G><S label="Monitor"><Ic w={15} h={15}><path d="M7.500 0v15M0 7.500h15" strokeWidth="2" /></Ic></S></G>
        <G><S label="Aislar objetos"><Ic w={15} h={15}><path d="M1 1.500h5v5H1zM8.500 14h-5L6 9.500z" /><circle cx="12" cy="7" r="2.500" /></Ic></S></G>
        <G><S label="Rendimiento"><Ic><path d="M4 1h8v9H4z" fill="#3a87d8" stroke="#8cc3f0" /><path d="M1 8h6v5H1z" fill={Y} stroke="none" /><path d="m7 11 3 3 5-6" stroke="#3fbf55" strokeWidth="2.500" /></Ic></S></G>
        <G>
          <S label="Pantalla limpia"><Ic w={15} h={12}><path d="M.500.500h14v11H.500zM9 5l3-2.500M6 7 3 9.500M10 2.500h2.500V5M5 9.500H2.500V7" /></Ic></S>
          <S label="Personalización"><Ic w={15} h={13}><path d="M0 1.500h15M0 6.500h15M0 11.500h15" strokeWidth="1.600" stroke="#fff" /></Ic></S>
        </G>
      </div>
    </footer>
  );
}

const Task = ({ label, run = false, active = false, children }: Kids & { label: string; run?: boolean; active?: boolean }) => (
  <button aria-label={label} title={label} className={`relative flex h-[35px] w-[40px] shrink-0 items-center justify-center ${active ? "bg-[#5b5965]" : ""}`}>
    {children}
    {run && <span className={active ? "absolute inset-x-0 bottom-0 h-[2px] bg-[#7dbdf0]" : "absolute inset-x-[4px] bottom-0 h-[2px] bg-[#7dbdf0]"} />}
  </button>
);

const Doc = ({ c, l }: { c: string; l: string }) => (
  <span className="flex h-[18px] items-center">
    <span className="flex h-[18px] w-[11px] items-center justify-center text-[9px] font-bold text-white" style={{ background: c }}>{l}</span>
    <svg width="9" height="16" aria-hidden="true"><path d="M0 0h9v16H0z" fill="#f4f4f4" /><path d="M1 3h6M1 5.500h6M1 8h6M1 10.500h6M1 13h6" stroke={c} /></svg>
  </span>
);

function Taskbar() {
  return (
    <div className="flex h-[35px] items-center bg-linear-to-r from-[#3d1a1c] via-[#3a181b] via-55% to-[#3f1717] text-white">
      <button aria-label="Inicio" className="flex h-[35px] w-[42px] shrink-0 items-center justify-center"><FaWindows size={15} /></button>
      <label className="flex h-[35px] w-[303px] shrink-0 items-center gap-[9px] border border-[#cfcfcf] bg-[#f1f1f1] pl-[9px]">
        <svg width="17" height="17" viewBox="0 0 17 17" fill="none" stroke="#222" strokeWidth="1.300" aria-hidden="true"><circle cx="10" cy="6" r="4.800" /><path d="M6.500 9.500 1.500 15" /></svg>
        <input aria-label="Buscar" placeholder="Escribe aquí para buscar" className="min-w-0 flex-1 text-[12px] text-black outline-none placeholder:text-[#3c3c3c]" />
      </label>
      <Task label="Cortana"><Ic><circle cx="8" cy="8" r="5.500" strokeWidth="2.200" stroke="#fff" /></Ic></Task>
      <div className="mx-[2px]"><Task label="Vista de tareas"><Ic><path d="M1 1v2.500h9V1M1 15v-2.500h9V15M1.500 5.500h8v5h-8zM13.500 1v14" stroke="#fff" /><path d="M12 5h3v3h-3z" fill="#fff" stroke="none" /></Ic></Task></div>
      <Task label="Netflix"><Ic w={21} h={21}><path d="M0 0h21v21H0z" fill="#000" stroke="none" /><path d="M8 4v13.500M13 4v13.500" stroke="#b00710" strokeWidth="2" /><path d="m7 4 4.500 13.500H14L9.500 4z" fill="#e50914" stroke="none" /></Ic></Task>
      <Task label="Explorador de archivos" run><Ic w={20} h={18}><path d="M1 1h7l2 2h9v14H1z" fill="#e8b33c" stroke="none" /><path d="M1 5h18v12H1z" fill="#fddb7c" stroke="none" /><path d="M4 17v-7h12v7h-3v-4H7v4z" fill="#3a95dc" stroke="none" /></Ic></Task>
      <Task label="Microsoft Store"><Ic w={20} h={20}><path d="M6.500 5V3a3.500 3.500 0 0 1 7 0v2" stroke="#fff" strokeWidth="1.500" /><path d="M0 5h20v15H0z" fill="#fff" stroke="none" /><path d="M5 7.500h4.500v4.500H5z" fill="#f25022" stroke="none" /><path d="M10.500 7.500H15v4.500h-4.500z" fill="#7fba00" stroke="none" /><path d="M5 13h4.500v4.500H5z" fill="#00a4ef" stroke="none" /><path d="M10.500 13H15v4.500h-4.500z" fill="#ffb900" stroke="none" /></Ic></Task>
      <Task label="Unidad"><Ic w={20} h={14}><path d="m1 6 11-5 7 3v3L9 13l-8-3z" fill="#fff" stroke="none" /><path d="m1 6 8 3.500L19 4M9 9.500V13M11 10.500l6-3" stroke="#4a2a2c" strokeWidth=".8" /></Ic></Task>
      <Task label="Correo">
        <Ic w={22} h={20}><path d="M0 7 11 0l11 7z" fill="#1065b5" stroke="none" /><path d="M0 7h22v13H0z" fill="#35a5ea" stroke="none" /><path d="M2 7h18l-9 6z" fill="#e9f4fc" stroke="none" /><path d="m0 20 11-9 11 9z" fill="#1b88d8" stroke="none" /></Ic>
        <span className="absolute top-[16px] left-[25px] flex h-[14px] w-[14px] items-center justify-center rounded-full border border-[#9c9c9c] bg-[#2d2d30] text-[10px] leading-[10px]">2</span>
      </Task>
      <Task label="Office"><Ic w={17} h={20}><path d="m10 0 7 2.500v15L10 20 1 16l9 1.500V3.500L5 5v8.500L1 15V5z" fill="#e2401b" stroke="none" /><path d="m10 0 7 2.500v15L10 20z" fill="#f26a2a" stroke="none" /></Ic></Task>
      <Task label="S"><Ic w={14} h={22}><path d="m11 1-8 7v3l4 3-3 7 8-8-1-4-4.500-1.500z" fill="#fff" stroke="#fff" strokeWidth=".8" /></Ic></Task>
      <div className="mx-px"><Task label="Dropbox"><FaDropbox size={21} /></Task></div>
      <div className="flex bg-linear-to-r from-[#2a1b26] via-[#1a2440] to-[#2a1b26]">
        <Task label="Edge" run><FaEdgeLegacy size={19} color="#1285e0" /></Task>
        <Task label="Chrome" run>
          <svg width="20" height="20" viewBox="0 0 20 20" aria-hidden="true"><path d="M10 10 1.300 5A10 10 0 0 1 18.700 5z" fill="#ea4335" /><path d="M10 10 18.700 5A10 10 0 0 1 10 20z" fill="#fbc116" /><path d="M10 10v10A10 10 0 0 1 1.300 5z" fill="#34a853" /><circle cx="10" cy="10" r="4.800" fill="#fff" /><circle cx="10" cy="10" r="3.800" fill="#4285f4" /></svg>
        </Task>
        <Task label="Word" run><Doc c="#2b579a" l="W" /></Task>
        <Task label="Excel" run><Doc c="#217346" l="X" /></Task>
        <Task label="AutoCAD" run active><Ic w={21} h={21}><path d="M0 0h21v21H0z" fill="#f6e3e1" stroke="none" /><path d="M3 17 8.500 3h4L18 17h-4l-1-3H8l-1.500 3z" fill="#c5282d" stroke="none" /><path d="m9 11 1.500-4L12 11z" fill="#f6e3e1" stroke="none" /></Ic></Task>
      </div>
      <div className="ml-auto flex items-center">
        <button aria-label="Ayuda" className="relative mr-[7px] flex h-[20px] w-[20px] items-center justify-center rounded-full border-2 border-white bg-[#1b9ad6] text-[14px] font-bold">?<span className="absolute right-[-3px] bottom-[-2px] flex h-[9px] w-[9px] items-center justify-center rounded-full bg-[#1274b8] text-[8px]">i</span></button>
        <button aria-label="Iconos ocultos" className="mr-[8px]"><Ic w={12} h={8}><path d="m1 7 5-5 5 5" strokeWidth="1.500" stroke="#fff" /></Ic></button>
        <button aria-label="OneDrive" className="mr-[7px]"><Ic w={15} h={14}><path d="M3 9a3 3 0 0 1 0-5 5 5 0 0 1 9 0v5z" fill="#a9a9a9" stroke="none" /><circle cx="10.500" cy="9.500" r="4" fill="#d3262c" stroke="none" /><path d="m9 8 3 3M12 8l-3 3" stroke="#fff" /></Ic></button>
        <button aria-label="Batería" className="mr-[8px]"><Ic w={15} h={11}><path d="M4 3.500h9.500v6H4zM14.500 5v3" stroke="#fff" /><path d="M6 5.500h6v2H6z" fill="#fff" stroke="none" /><path d="M2 0v2M5 0v2M.500 2h5v2h-5zM3 4v3" stroke="#fff" /></Ic></button>
        <button aria-label="Red" className="mr-[7px]"><Ic w={13} h={13}><path d="M1 11A11 11 0 0 1 12 1M4 12a8 8 0 0 1 8-7.500M7 12a5 5 0 0 1 5-4.500" stroke="#ddd" /><circle cx="11" cy="11" r="1.500" fill="#fff" stroke="none" /></Ic></button>
        <button aria-label="Volumen" className="mr-[9px]"><Ic w={15} h={12}><path d="M1 4h2.500L7 1v10L3.500 8H1z" stroke="#fff" /><path d="M9 4q1.500 2 0 4M11 2.500q3 3.500 0 7" stroke="#fff" /><path d="M13 1q4 5 0 10" stroke="#8d7373" /></Ic></button>
        <time dateTime="2020-05-16T23:26" className="w-[52px] text-center text-[10px] leading-[15px] whitespace-nowrap">11:26 p. m.<br />16/05/2020</time>
        <button aria-label="Notificaciones" className="relative mr-[17px] ml-[14px] flex h-[20px] w-[20px]">
          <Ic w={16} h={16}><path d="M1 1h14v11H8l-3 3v-3H1z" fill="#fff" stroke="none" /><path d="M3 4h10M3 6.500h10M3 9h6" stroke="#3f1717" /></Ic>
          <span className="absolute top-[8px] left-[8px] flex h-[13px] w-[13px] items-center justify-center rounded-full border border-[#9c9c9c] bg-[#2d2d30] text-[10px] leading-[10px]">2</span>
        </button>
      </div>
    </div>
  );
}

export default function App() {
  return (
    <div className="flex min-h-screen flex-col bg-[#dadcde] pt-[2px] font-['Noto_Sans','Open_Sans',sans-serif]">
      <div className="mr-[3px] ml-[2px] flex flex-1 flex-col border-r-2 border-l-3 border-[#2c3847] bg-[#222933]">
        <Header />
        <Ribbon />
        <FileTabs />
        <Workspace />
        <StatusBar />
      </div>
      <Taskbar />
    </div>
  );
}
